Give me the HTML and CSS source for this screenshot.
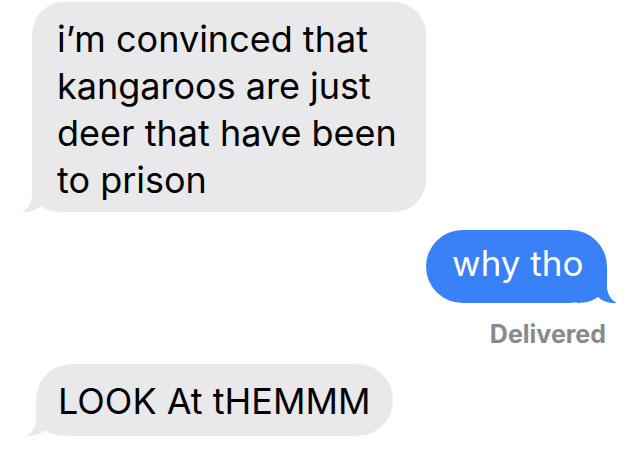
FILE: index.html
```html
<!DOCTYPE html>
<html lang="en">
<head>
<meta charset="utf-8">
<title>Messages</title>
<link rel="stylesheet" href="styles.css">
</head>
<body>
<main class="thread">
  <div class="bubble incoming first">
    <svg class="tail tail-left" viewBox="0 0 40 37" aria-hidden="true"><path d="M10 0 L10 20 C10 28 6 34 0 37 C8 37.5 15 35 19 31 C23 34 30 37 40 37 L40 0 Z"/></svg>
    <span class="line">i’m convinced that</span>
    <span class="line">kangaroos are just</span>
    <span class="line">deer that have been</span>
    <span class="line">to prison</span>
  </div>
  <div class="bubble outgoing">
    <svg class="tail tail-right" viewBox="0 0 40 37" aria-hidden="true"><path d="M10 0 L10 20 C10 28 6 34 0 37 C8 37.5 15 35 19 31 C23 34 30 37 40 37 L40 0 Z"/></svg>
    <span class="line">why tho</span>
  </div>
  <div class="status">Delivered</div>
  <div class="bubble incoming last">
    <svg class="tail tail-left" viewBox="0 0 40 37" aria-hidden="true"><path d="M10 0 L10 20 C10 28 6 34 0 37 C8 37.5 15 35 19 31 C23 34 30 37 40 37 L40 0 Z"/></svg>
    <span class="line">LOOK At tHEMMM</span>
  </div>
</main>
</body>
</html>
```

FILE: styles.css
```css
html, body {
  margin: 0;
  padding: 0;
  background: #ffffff;
}

.thread {
  display: flex;
  flex-direction: column;
  padding-top: 2px;
  font-family: Inter, "Liberation Sans", sans-serif;
  font-size: 36px;
  line-height: 47px;
  color: #000000;
}

.bubble {
  position: relative;
  box-sizing: border-box;
  border-radius: 32px;
}

.line {
  position: relative;
  display: block;
  white-space: nowrap;
}

.incoming {
  align-self: flex-start;
  background: #e9e9eb;
  fill: #e9e9eb;
}

.outgoing {
  align-self: flex-end;
  background: #3a80f6;
  fill: #3a80f6;
  color: #ffffff;
}

.first {
  margin-left: 32px;
  width: 394px;
  height: 210px;
  padding: 14px 0 0 25px;
}

.outgoing {
  margin-top: 18px;
  margin-right: 33px;
  width: 181px;
  height: 73px;
  border-radius: 37px;
  padding: 10px 0 0 26px;
  font-size: 35px;
}

.status {
  align-self: flex-end;
  margin-top: 16px;
  margin-right: 34px;
  font-size: 25px;
  line-height: 30px;
  font-weight: 700;
  color: #8a8a8e;
}

.last {
  margin-top: 15px;
  margin-left: 36px;
  width: 357px;
  height: 72px;
  border-radius: 36px;
  padding: 14px 0 0 22px;
}

.tail {
  position: absolute;
  bottom: 0;
  width: 40px;
  height: 37px;
  overflow: visible;
}

.tail-left {
  left: -10px;
}

.tail-right {
  right: -10px;
  transform: scaleX(-1);
}
```
